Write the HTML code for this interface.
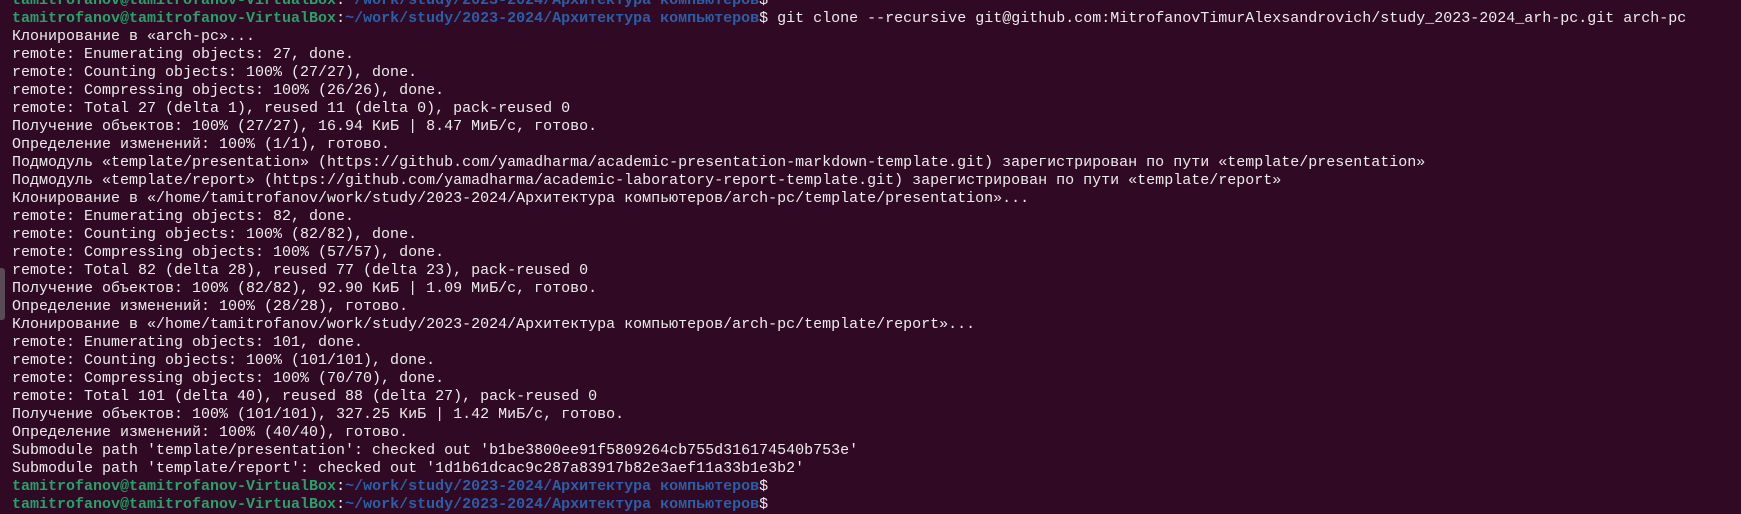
<!DOCTYPE html>
<html><head><meta charset="utf-8"><style>
html,body{margin:0;padding:0;width:1741px;height:504px;overflow:hidden;background:#300a24;}
pre{position:absolute;left:12px;top:-8px;margin:0;font-family:"Liberation Mono","DejaVu Sans Mono",monospace;font-size:15px;line-height:18px;color:#ececec;white-space:pre;}
.g{color:#26a269;font-weight:bold}.b{color:#2a5fa8;font-weight:bold}
.bar{position:absolute;left:0;top:268px;width:5px;height:52px;background:#5a4a55;border-radius:0 3px 3px 0}
</style></head><body>
<div class="bar"></div>
<pre><span class="g">tamitrofanov@tamitrofanov-VirtualBox</span>:<span class="b">~/work/study/2023-2024/Архитектура компьютеров</span>$
<span class="g">tamitrofanov@tamitrofanov-VirtualBox</span>:<span class="b">~/work/study/2023-2024/Архитектура компьютеров</span>$ git clone --recursive git@github.com:MitrofanovTimurAlexsandrovich/study_2023-2024_arh-pc.git arch-pc
Клонирование в «arch-pc»...
remote: Enumerating objects: 27, done.
remote: Counting objects: 100% (27/27), done.
remote: Compressing objects: 100% (26/26), done.
remote: Total 27 (delta 1), reused 11 (delta 0), pack-reused 0
Получение объектов: 100% (27/27), 16.94 КиБ | 8.47 МиБ/с, готово.
Определение изменений: 100% (1/1), готово.
Подмодуль «template/presentation» (https://github.com/yamadharma/academic-presentation-markdown-template.git) зарегистрирован по пути «template/presentation»
Подмодуль «template/report» (https://github.com/yamadharma/academic-laboratory-report-template.git) зарегистрирован по пути «template/report»
Клонирование в «/home/tamitrofanov/work/study/2023-2024/Архитектура компьютеров/arch-pc/template/presentation»...
remote: Enumerating objects: 82, done.
remote: Counting objects: 100% (82/82), done.
remote: Compressing objects: 100% (57/57), done.
remote: Total 82 (delta 28), reused 77 (delta 23), pack-reused 0
Получение объектов: 100% (82/82), 92.90 КиБ | 1.09 МиБ/с, готово.
Определение изменений: 100% (28/28), готово.
Клонирование в «/home/tamitrofanov/work/study/2023-2024/Архитектура компьютеров/arch-pc/template/report»...
remote: Enumerating objects: 101, done.
remote: Counting objects: 100% (101/101), done.
remote: Compressing objects: 100% (70/70), done.
remote: Total 101 (delta 40), reused 88 (delta 27), pack-reused 0
Получение объектов: 100% (101/101), 327.25 КиБ | 1.42 МиБ/с, готово.
Определение изменений: 100% (40/40), готово.
Submodule path 'template/presentation': checked out 'b1be3800ee91f5809264cb755d316174540b753e'
Submodule path 'template/report': checked out '1d1b61dcac9c287a83917b82e3aef11a33b1e3b2'
<span class="g">tamitrofanov@tamitrofanov-VirtualBox</span>:<span class="b">~/work/study/2023-2024/Архитектура компьютеров</span>$
<span class="g">tamitrofanov@tamitrofanov-VirtualBox</span>:<span class="b">~/work/study/2023-2024/Архитектура компьютеров</span>$</pre>
</body></html>
